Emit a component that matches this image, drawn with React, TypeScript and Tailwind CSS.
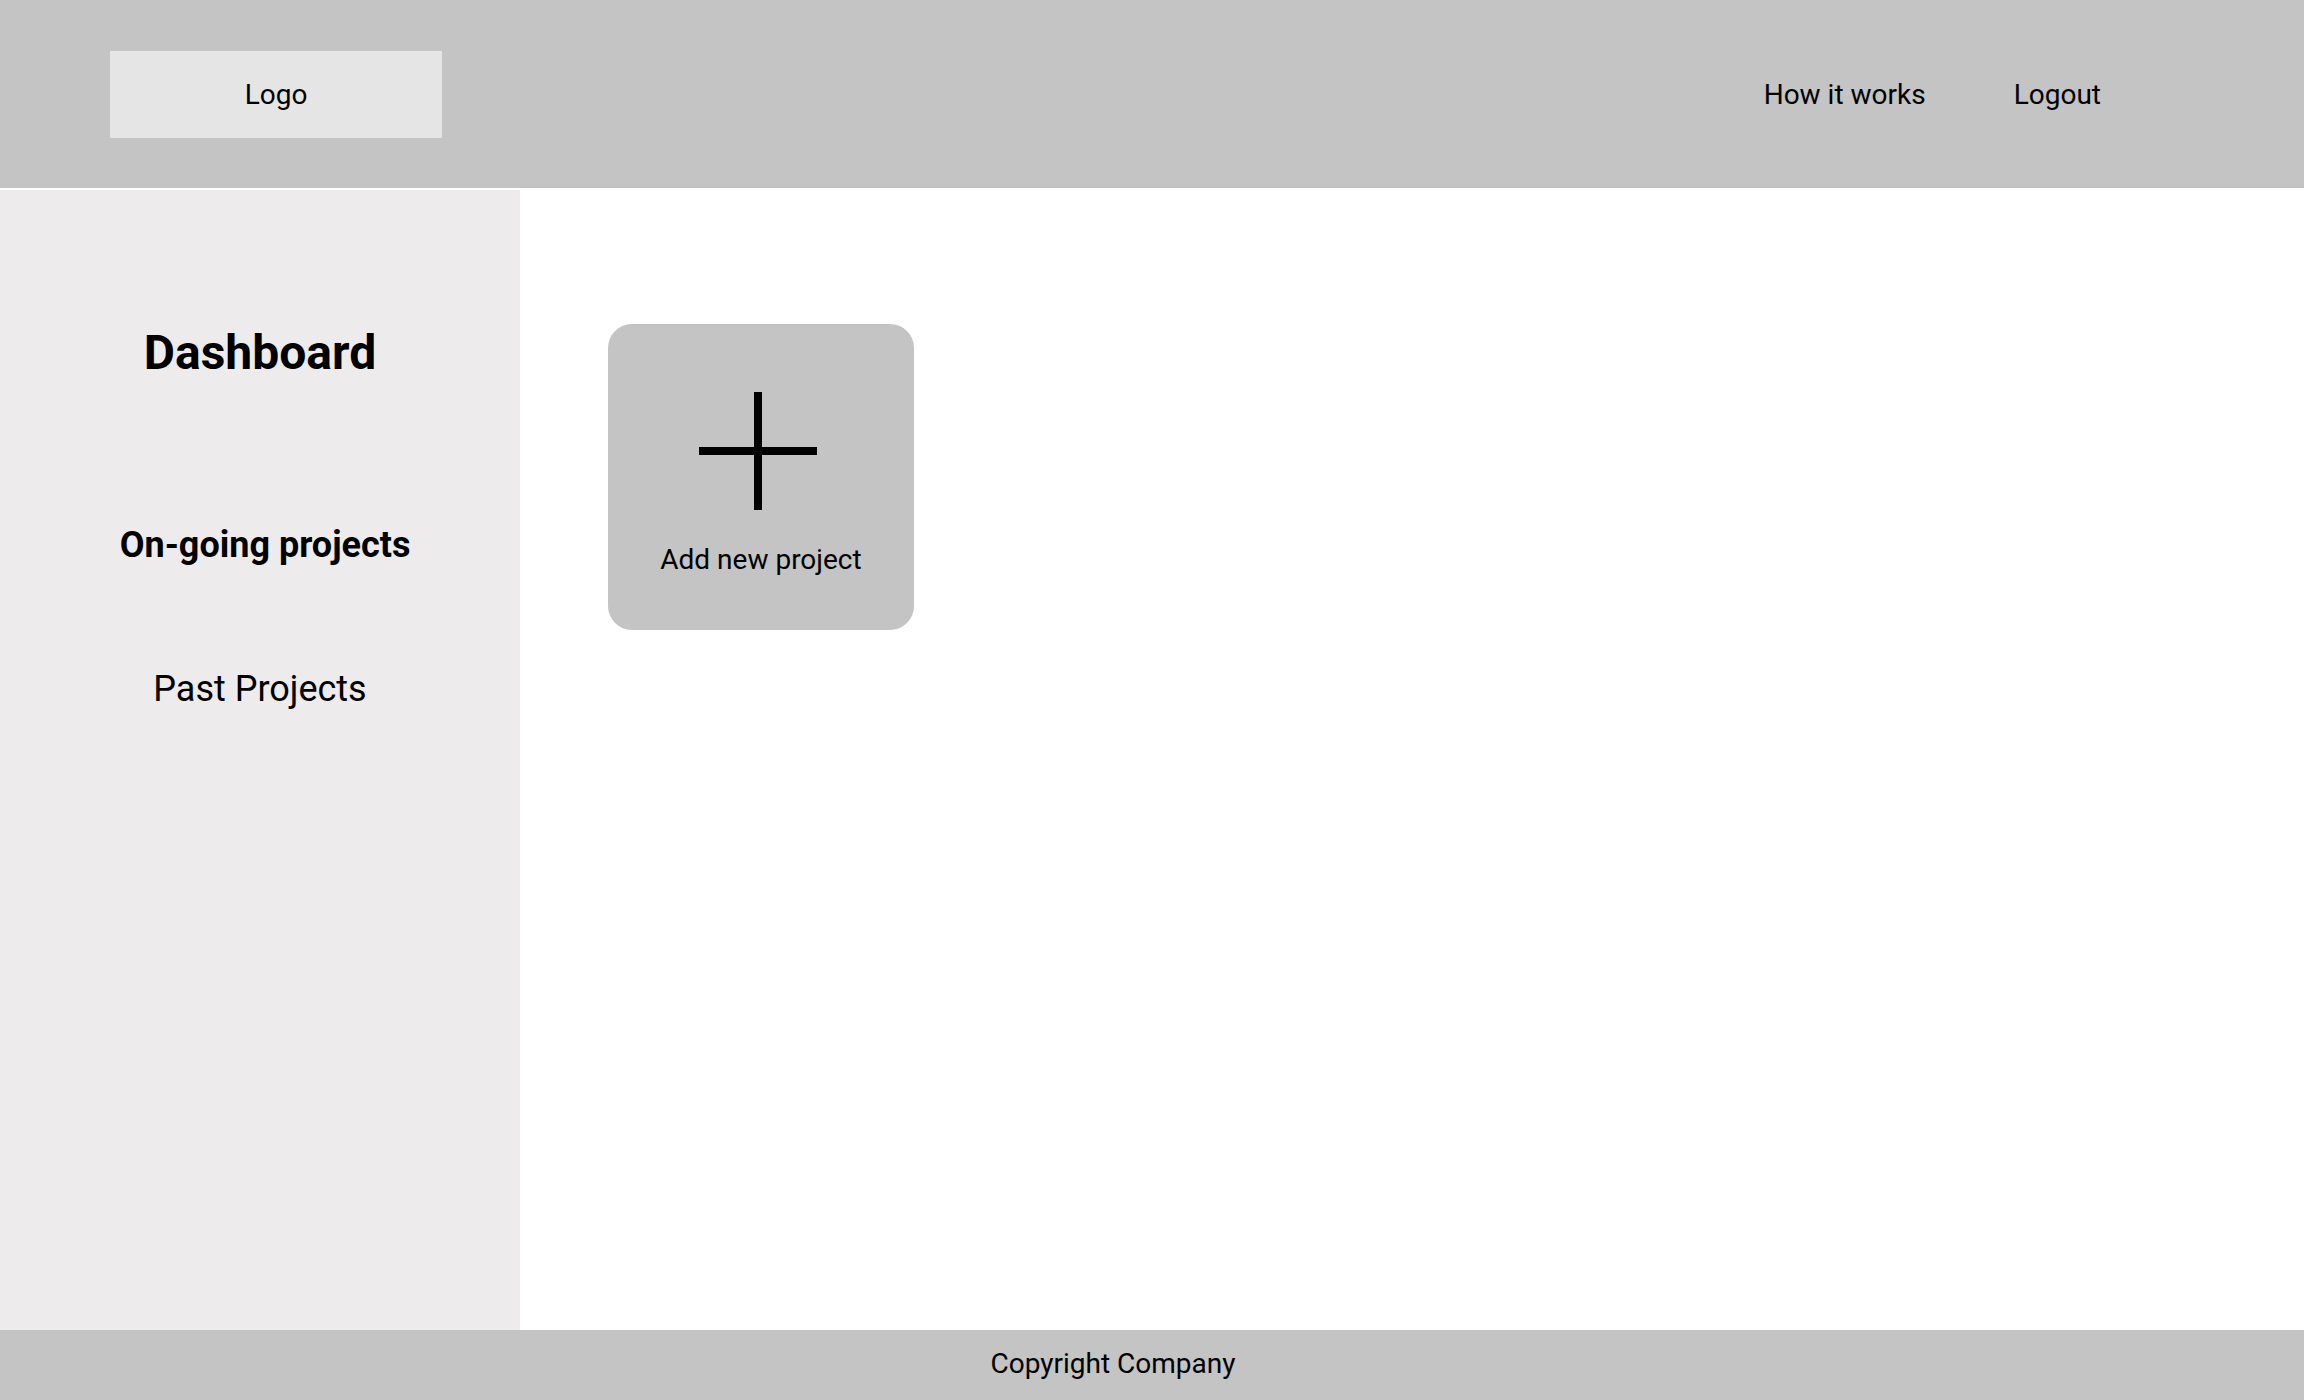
import React from "react";

export default function App() {
  return (
    <div
      className="flex h-[1400px] w-[2304px] flex-col bg-white text-black"
      style={{ fontFamily: "Roboto, 'Liberation Sans', sans-serif" }}
    >
      <header className="flex h-[188px] shrink-0 items-center bg-[#c4c4c4] pl-[110px] pr-[203px]">
        <div className="flex h-[87px] w-[332px] items-center justify-center bg-[#e5e5e5] pt-[2px] text-[28px] leading-none">
          Logo
        </div>
        <nav className="ml-auto flex items-center gap-[88px] pt-[2px] text-[28px] leading-none">
          <a className="cursor-pointer">How it works</a>
          <a className="cursor-pointer">Logout</a>
        </nav>
      </header>

      <div className="mt-[2px] flex flex-1">
        <aside className="flex w-[520px] shrink-0 flex-col items-center bg-[#edebeb] pt-[139px]">
          <h1 className="text-[48px] font-bold leading-none">Dashboard</h1>
          <div className="mt-[150px] ml-[10px] text-[36px] font-bold leading-none">On-going projects</div>
          <div className="mt-[108px] text-[36px] leading-none">Past Projects</div>
        </aside>

        <main className="flex-1 pl-[88px] pt-[134px]">
          <button className="flex h-[306px] w-[306px] flex-col items-center rounded-[24px] bg-[#c4c4c4] pt-[68px]">
            <svg width="118" height="118" viewBox="0 0 118 118" className="-ml-[6px]">
              <rect x="55" y="0" width="8" height="118" fill="#000" />
              <rect x="0" y="55" width="118" height="8" fill="#000" />
            </svg>
            <span className="mt-[36px] text-[28px] leading-none">Add new project</span>
          </button>
        </main>
      </div>

      <footer className="flex h-[70px] shrink-0 justify-center bg-[#c4c4c4] pr-[78px] pt-[20px] text-[28px] leading-none">
        Copyright Company
      </footer>
    </div>
  );
}
